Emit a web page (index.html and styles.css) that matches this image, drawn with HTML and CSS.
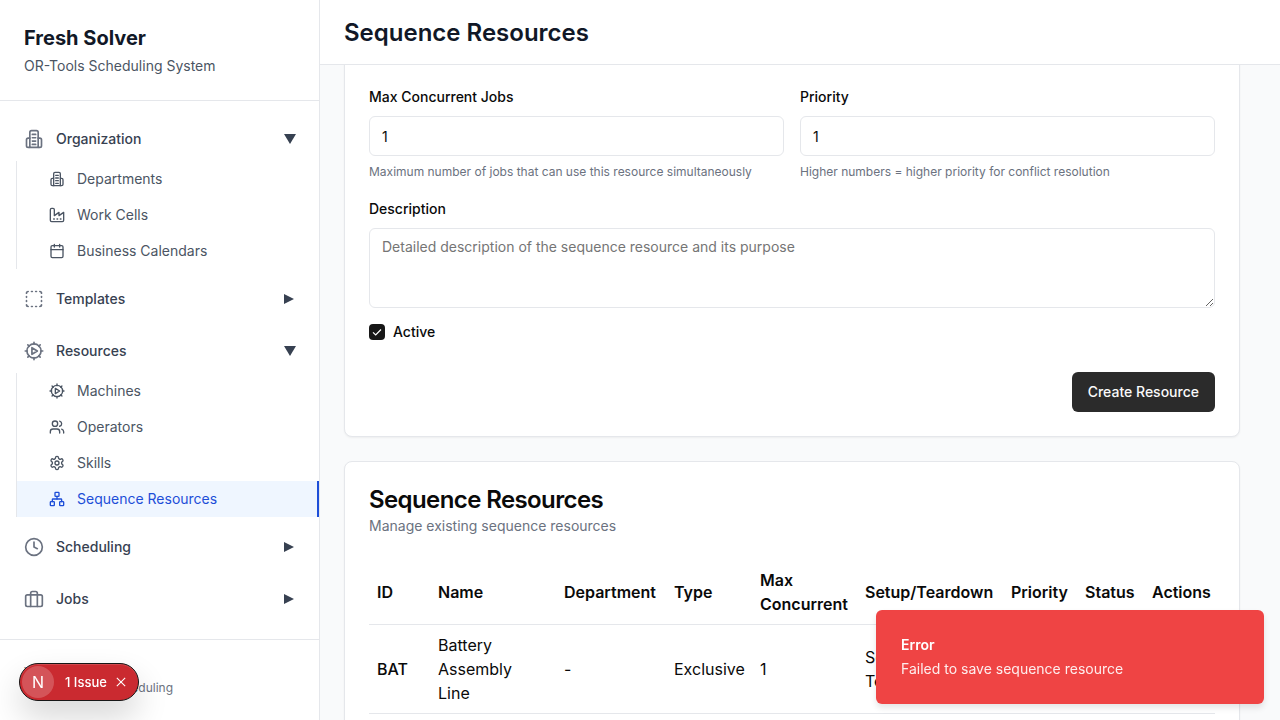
FILE: index.html
```html
<!DOCTYPE html>
<html lang="en">
<head>
    <meta charset="UTF-8">
    <meta name="viewport" content="width=device-width, initial-scale=1.0">
    <title>Sequence Resources - Fresh Solver</title>
    <link rel="stylesheet" href="styles.css">
</head>
<body>

<svg class="sprite" xmlns="http://www.w3.org/2000/svg">
    <symbol id="i-building" viewBox="0 0 24 24"><path d="M7 22V4a2 2 0 0 1 2-2h6a2 2 0 0 1 2 2v18Z"/><path d="M7 11H5a2 2 0 0 0-2 2v7a2 2 0 0 0 2 2h2"/><path d="M17 11h2a2 2 0 0 1 2 2v7a2 2 0 0 1-2 2h-2"/><path d="M10 6.500h4M10 10.500h4M10 14.500h4M10 18.500h4"/></symbol>
    <symbol id="i-factory" viewBox="0 0 24 24"><path d="M2 20a2 2 0 0 0 2 2h16a2 2 0 0 0 2-2V8l-7 5V8l-7 5V4a2 2 0 0 0-2-2H4a2 2 0 0 0-2 2Z"/><path d="M17 18h1M12 18h1M7 18h1"/></symbol>
    <symbol id="i-calendar" viewBox="0 0 24 24"><path d="M8 2v4M16 2v4"/><rect x="3" y="4" width="18" height="18" rx="2"/><path d="M3 10h18"/></symbol>
    <symbol id="i-dashed" viewBox="0 0 24 24"><path d="M5 3a2 2 0 0 0-2 2M19 3a2 2 0 0 1 2 2M21 19a2 2 0 0 1-2 2M5 21a2 2 0 0 1-2-2M9 3h1M9 21h1M14 3h1M14 21h1M3 9v1M21 9v1M3 14v1M21 14v1"/></symbol>
    <symbol id="i-machine" viewBox="0 0 24 24"><circle cx="12" cy="12" r="8.500"/><path d="M12 1.500v2.500M12 20v2.500M1.500 12h2.500M20 12h2.500M4.600 4.600l1.700 1.700M17.700 17.700l1.700 1.700M4.600 19.400l1.700-1.700M17.700 6.300l1.700-1.700"/><path d="M9.500 8l6.500 4-6.500 4Z"/></symbol>
    <symbol id="i-users" viewBox="0 0 24 24"><path d="M16 21v-2a4 4 0 0 0-4-4H6a4 4 0 0 0-4 4v2"/><circle cx="9" cy="7" r="4"/><path d="M22 21v-2a4 4 0 0 0-3-3.870"/><path d="M16 3.130a4 4 0 0 1 0 7.750"/></symbol>
    <symbol id="i-settings" viewBox="0 0 24 24"><path d="M12.220 2h-.44a2 2 0 0 0-2 2v.18a2 2 0 0 1-1 1.730l-.43.25a2 2 0 0 1-2 0l-.15-.08a2 2 0 0 0-2.730.73l-.22.38a2 2 0 0 0 .73 2.730l.15.1a2 2 0 0 1 1 1.720v.51a2 2 0 0 1-1 1.740l-.15.09a2 2 0 0 0-.73 2.730l.22.38a2 2 0 0 0 2.730.73l.15-.08a2 2 0 0 1 2 0l.43.25a2 2 0 0 1 1 1.730V20a2 2 0 0 0 2 2h.44a2 2 0 0 0 2-2v-.18a2 2 0 0 1 1-1.730l.43-.25a2 2 0 0 1 2 0l.15.08a2 2 0 0 0 2.730-.73l.22-.39a2 2 0 0 0-.73-2.730l-.15-.08a2 2 0 0 1-1-1.740v-.5a2 2 0 0 1 1-1.740l.15-.09a2 2 0 0 0 .73-2.730l-.22-.38a2 2 0 0 0-2.730-.73l-.15.08a2 2 0 0 1-2 0l-.43-.25a2 2 0 0 1-1-1.730V4a2 2 0 0 0-2-2z"/><circle cx="12" cy="12" r="3"/></symbol>
    <symbol id="i-network" viewBox="0 0 24 24"><rect x="16" y="16" width="6" height="6" rx="1"/><rect x="2" y="16" width="6" height="6" rx="1"/><rect x="9" y="2" width="6" height="6" rx="1"/><path d="M5 16v-3a1 1 0 0 1 1-1h12a1 1 0 0 1 1 1v3"/><path d="M12 12V8"/></symbol>
    <symbol id="i-clock" viewBox="0 0 24 24"><circle cx="12" cy="12" r="10"/><path d="M12 6v6l4 2"/></symbol>
    <symbol id="i-briefcase" viewBox="0 0 24 24"><rect x="2" y="7" width="20" height="14" rx="2"/><path d="M16 21V5a2 2 0 0 0-2-2h-4a2 2 0 0 0-2 2v16"/></symbol>
</svg>

<div class="app">
    <aside class="sidebar">
        <div class="brand">
            <h1>Fresh Solver</h1>
            <p>OR-Tools Scheduling System</p>
        </div>

        <nav class="nav">
            <div class="nav-group">
                <div class="nav-item">
                    <svg class="icon"><use href="#i-building"/></svg>
                    <span class="nav-label">Organization</span>
                    <span class="caret caret-down"></span>
                </div>
                <div class="sub-nav">
                    <a class="sub-item"><svg class="icon-sm"><use href="#i-building"/></svg><span class="sub-label">Departments</span></a>
                    <a class="sub-item"><svg class="icon-sm"><use href="#i-factory"/></svg><span class="sub-label">Work Cells</span></a>
                    <a class="sub-item"><svg class="icon-sm"><use href="#i-calendar"/></svg><span class="sub-label">Business Calendars</span></a>
                </div>
            </div>

            <div class="nav-group">
                <div class="nav-item">
                    <svg class="icon"><use href="#i-dashed"/></svg>
                    <span class="nav-label">Templates</span>
                    <span class="caret caret-right"></span>
                </div>
            </div>

            <div class="nav-group">
                <div class="nav-item">
                    <svg class="icon"><use href="#i-machine"/></svg>
                    <span class="nav-label">Resources</span>
                    <span class="caret caret-down"></span>
                </div>
                <div class="sub-nav">
                    <a class="sub-item"><svg class="icon-sm"><use href="#i-machine"/></svg><span class="sub-label">Machines</span></a>
                    <a class="sub-item"><svg class="icon-sm"><use href="#i-users"/></svg><span class="sub-label">Operators</span></a>
                    <a class="sub-item"><svg class="icon-sm"><use href="#i-settings"/></svg><span class="sub-label">Skills</span></a>
                    <a class="sub-item active"><svg class="icon-sm"><use href="#i-network"/></svg><span class="sub-label">Sequence Resources</span></a>
                </div>
            </div>

            <div class="nav-group">
                <div class="nav-item">
                    <svg class="icon"><use href="#i-clock"/></svg>
                    <span class="nav-label">Scheduling</span>
                    <span class="caret caret-right"></span>
                </div>
            </div>

            <div class="nav-group">
                <div class="nav-item">
                    <svg class="icon"><use href="#i-briefcase"/></svg>
                    <span class="nav-label">Jobs</span>
                    <span class="caret caret-right"></span>
                </div>
            </div>
        </nav>

        <div class="sidebar-footer">
            <p>Version 1.0.0</p>
            <p>Optimized Job Scheduling</p>
        </div>
    </aside>

    <div class="main">
        <header class="page-header">
            <h2>Sequence Resources</h2>
        </header>

        <div class="scroller">
            <div class="content">
                <section class="card">
                    <form class="form">
                        <div class="form-row form-row-first">
                            <div class="field">
                                <label class="field-label">Resource ID</label>
                                <input class="input" type="text" value="">
                                <p class="hint">Setting code</p>
                            </div>
                            <div class="field">
                                <label class="field-label">Name</label>
                                <input class="input" type="text" value="">
                                <p class="hint">Friendly name</p>
                            </div>
                        </div>

                        <div class="form-row">
                            <div class="field">
                                <label class="field-label">Max Concurrent Jobs</label>
                                <input class="input" type="number" value="1">
                                <p class="hint">Maximum number of jobs that can use this resource simultaneously</p>
                            </div>
                            <div class="field">
                                <label class="field-label">Priority</label>
                                <input class="input" type="number" value="1">
                                <p class="hint">Higher numbers = higher priority for conflict resolution</p>
                            </div>
                        </div>

                        <div class="field">
                            <label class="field-label">Description</label>
                            <textarea class="input textarea" placeholder="Detailed description of the sequence resource and its purpose"></textarea>
                        </div>

                        <div class="check">
                            <span class="check-box">
                                <svg viewBox="0 0 16 16"><path d="M4 8.300l2.700 2.700L12 5.500"/></svg>
                            </span>
                            <span class="check-label">Active</span>
                        </div>

                        <div class="form-actions">
                            <button type="button" class="btn"><span class="btn-label">Create Resource</span></button>
                        </div>
                    </form>
                </section>

                <section class="card">
                    <h3>Sequence Resources</h3>
                    <p class="card-sub">Manage existing sequence resources</p>

                    <table class="table">
                        <colgroup>
                            <col class="col-id"><col class="col-name"><col class="col-dept"><col class="col-type">
                            <col class="col-max"><col class="col-setup"><col class="col-prio"><col class="col-status"><col class="col-actions">
                        </colgroup>
                        <thead>
                            <tr>
                                <th>ID</th>
                                <th>Name</th>
                                <th>Department</th>
                                <th>Type</th>
                                <th>Max Concurrent</th>
                                <th>Setup/Teardown</th>
                                <th>Priority</th>
                                <th>Status</th>
                                <th>Actions</th>
                            </tr>
                        </thead>
                        <tbody>
                            <tr>
                                <td class="cell-id">BAT</td>
                                <td>Battery Assembly Line</td>
                                <td>-</td>
                                <td>Exclusive</td>
                                <td>1</td>
                                <td>Setup: 0<br>Teardown: 0</td>
                                <td>1</td>
                                <td>Active</td>
                                <td>Edit</td>
                            </tr>
                        </tbody>
                    </table>
                </section>
            </div>
        </div>
    </div>
</div>

<div class="issue-badge">
    <span class="issue-logo">N</span>
    <span class="issue-text">1 Issue</span>
    <svg class="issue-close" viewBox="0 0 12 12"><path d="M1 1l10 10M11 1L1 11"/></svg>
</div>

<div class="toast">
    <div class="toast-title">Error</div>
    <div class="toast-msg">Failed to save sequence resource</div>
</div>

</body>
</html>
```

FILE: styles.css
```css
* {
    box-sizing: border-box;
}

html, body {
    height: 100%;
}

body {
    margin: 0;
    font-family: Inter, "Liberation Sans", sans-serif;
    color: #0a0a0a;
    background-color: #f9fafb;
    overflow: hidden;
}

p, h1, h2, h3 {
    margin: 0;
}

.sprite {
    display: none;
}

.app {
    display: flex;
    height: 100vh;
}

/* sidebar */
.sidebar {
    width: 320px;
    flex-shrink: 0;
    display: flex;
    flex-direction: column;
    background-color: #fff;
    border-right: 1px solid #e5e7eb;
}

.brand {
    height: 101px;
    padding: 24px;
    border-bottom: 1px solid #e5e7eb;
}

.brand h1 {
    font-size: 20px;
    line-height: 28px;
    font-weight: 700;
    color: #111827;
}

.brand p {
    margin-top: 4px;
    font-size: 14px;
    line-height: 20px;
    color: #4b5563;
}

.nav {
    flex: 1;
    padding: 16px 0 0;
}

.nav-group {
    margin-bottom: 8px;
}

.nav-item {
    display: flex;
    align-items: center;
    height: 44px;
    padding: 0 24px;
    font-size: 14px;
    font-weight: 500;
    color: #374151;
}

.icon {
    width: 20px;
    height: 20px;
    margin-right: 12px;
    fill: none;
    stroke: #6b7280;
    stroke-width: 2;
    stroke-linecap: round;
    stroke-linejoin: round;
}

.icon-sm {
    width: 16px;
    height: 16px;
    margin-right: 12px;
    fill: none;
    stroke: currentColor;
    stroke-width: 2;
    stroke-linecap: round;
    stroke-linejoin: round;
}

.nav-label {
    flex: 1;
    padding-bottom: 2px;
}

.sub-label {
    padding-bottom: 2px;
}

.caret {
    width: 0;
    height: 0;
}

.caret-down {
    margin-right: -1px;
    border-left: 6px solid transparent;
    border-right: 6px solid transparent;
    border-top: 10px solid #374151;
}

.caret-right {
    margin-right: 1px;
    border-top: 5.5px solid transparent;
    border-bottom: 5.5px solid transparent;
    border-left: 10px solid #374151;
}

.sub-nav {
    margin-left: 16px;
    border-left: 1px solid #e5e7eb;
}

.sub-item {
    display: flex;
    align-items: center;
    height: 36px;
    padding-left: 32px;
    font-size: 14px;
    color: #4b5563;
}

.sub-item.active {
    color: #1d4ed8;
    background-color: #eff6ff;
    border-right: 2px solid #1d4ed8;
}

.sidebar-footer {
    height: 81px;
    padding: 24px;
    border-top: 1px solid #e5e7eb;
    font-size: 12px;
    line-height: 16px;
    color: #6b7280;
}

/* main column */
.main {
    flex: 1;
    min-width: 0;
    display: flex;
    flex-direction: column;
}

.page-header {
    height: 65px;
    padding: 2px 24px 0;
    display: flex;
    align-items: center;
    background-color: #fff;
    border-bottom: 1px solid #e5e7eb;
}

.page-header h2 {
    font-size: 24px;
    line-height: 32px;
    font-weight: 600;
    color: #111827;
}

.scroller {
    flex: 1;
    overflow: hidden;
}

/* scrolled down past the top of the form */
.content {
    margin-top: -117px;
    padding: 0 40px 0 24px;
}

.card {
    padding: 24px;
    margin-bottom: 24px;
    background-color: #fff;
    border: 1px solid #e5e7eb;
    border-radius: 8px;
    box-shadow: 0 1px 2px rgba(0, 0, 0, 0.05);
}

.form {
    display: flex;
    flex-direction: column;
}

.form-row {
    display: grid;
    grid-template-columns: 1fr 1fr;
    gap: 16px;
    margin-bottom: 19px;
}

.form-row-first {
    margin-bottom: 21px;
}

.field {
    display: flex;
    flex-direction: column;
}

.field-label {
    font-size: 14px;
    line-height: 20px;
    font-weight: 500;
    margin-bottom: 9px;
}

.input {
    width: 100%;
    height: 40px;
    padding: 8px 12px;
    font-family: inherit;
    font-size: 14px;
    color: #0a0a0a;
    background-color: #fff;
    border: 1px solid #e5e7eb;
    border-radius: 6px;
    outline: none;
}

.textarea {
    display: block;
    height: 80px;
    line-height: 20px;
}

.hint {
    margin-top: 8px;
    font-size: 12px;
    line-height: 16px;
    color: #6b7280;
}

.check {
    display: flex;
    align-items: center;
    gap: 8px;
    margin-top: 14px;
    height: 20px;
    font-size: 14px;
    font-weight: 500;
}

.check-box {
    width: 16px;
    height: 16px;
    background-color: #171717;
    border-radius: 4px;
}

.check-box svg {
    display: block;
    width: 16px;
    height: 16px;
    fill: none;
    stroke: #fff;
    stroke-width: 1.2;
}

.check-label {
    padding-bottom: 2px;
}

.form-actions {
    display: flex;
    justify-content: flex-end;
    margin-top: 30px;
}

.btn {
    height: 40px;
    padding: 0 16px;
    font-family: inherit;
    font-size: 14px;
    font-weight: 500;
    color: #fafafa;
    background-color: #2b2b2b;
    border: 0;
    border-radius: 6px;
}

.btn-label {
    display: block;
    padding-bottom: 2px;
}

.card h3 {
    font-size: 24px;
    line-height: 28px;
    font-weight: 600;
    letter-spacing: -0.6px;
}

.card-sub {
    margin-top: 2px;
    font-size: 14px;
    line-height: 20px;
    color: #6b7280;
}

.table {
    width: 100%;
    margin-top: 24px;
    border-collapse: collapse;
    table-layout: fixed;
    font-size: 16px;
    line-height: 24px;
}

.col-id { width: 61px; }
.col-name { width: 126px; }
.col-dept { width: 110px; }
.col-type { width: 86px; }
.col-max { width: 105px; }
.col-setup { width: 146px; }
.col-prio { width: 74px; }
.col-status { width: 67px; }

.table th {
    padding: 8px;
    text-align: left;
    vertical-align: middle;
    font-weight: 600;
    border-bottom: 1px solid #e5e7eb;
}

.table td {
    padding: 8px;
    border-bottom: 1px solid #e5e7eb;
}

.cell-id {
    font-weight: 500;
}

/* dev overlay pill */
.issue-badge {
    position: fixed;
    left: 19px;
    bottom: 19px;
    width: 120px;
    height: 38px;
    display: flex;
    align-items: center;
    padding: 0 2px;
    color: #fff;
    background-color: #ca2a30;
    border: 1px solid #171717;
    border-radius: 19px;
    box-shadow: inset 0 1px 0 rgba(255, 255, 255, 0.15), 0 16px 32px rgba(0, 0, 0, 0.16);
}

.issue-logo {
    width: 32px;
    height: 32px;
    display: flex;
    align-items: center;
    justify-content: center;
    font-size: 16px;
    background-color: rgba(255, 255, 255, 0.2);
    border-radius: 50%;
}

.issue-text {
    margin-left: 11px;
    font-size: 13px;
    font-weight: 500;
}

.issue-close {
    width: 10px;
    height: 10px;
    margin-left: 9px;
    fill: none;
    stroke: #fff;
    stroke-width: 1.3;
}

/* toast */
.toast {
    position: fixed;
    right: 16px;
    bottom: 16px;
    width: 388px;
    height: 94px;
    padding: 25px;
    color: #fff;
    background-color: #ef4444;
    border-radius: 6px;
    box-shadow: 0 4px 6px rgba(0, 0, 0, 0.1);
    font-size: 14px;
    line-height: 20px;
}

.toast-title {
    font-weight: 600;
}

.toast-msg {
    margin-top: 4px;
    opacity: 0.9;
}
```
